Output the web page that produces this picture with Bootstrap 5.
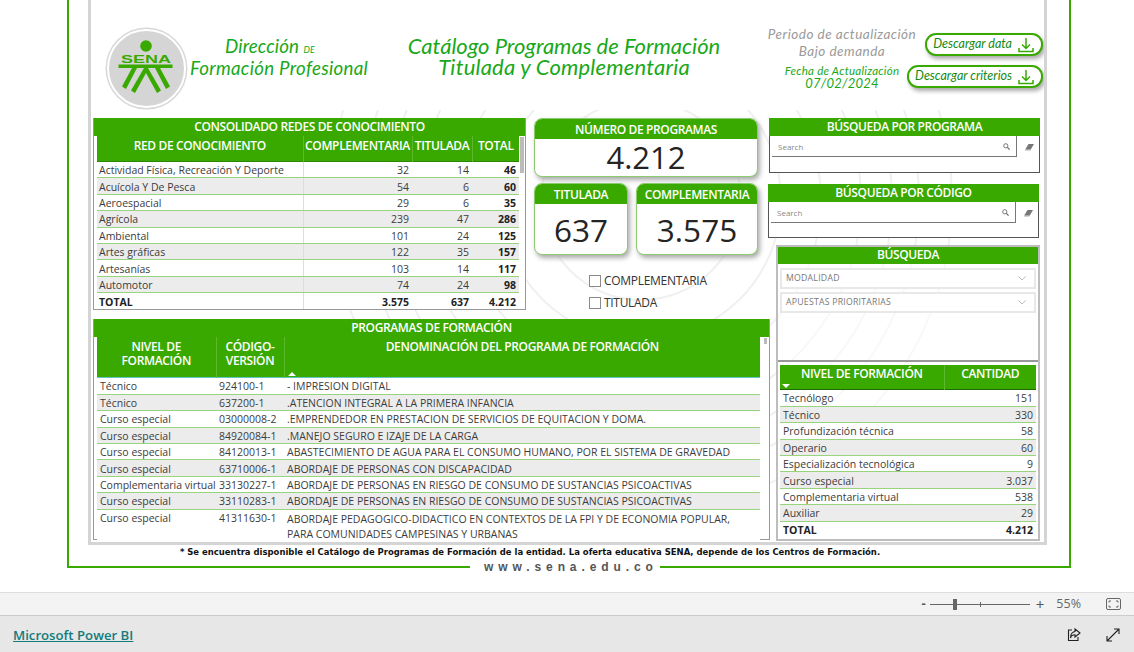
<!DOCTYPE html>
<html lang="es"><head><meta charset="utf-8"><title>Catálogo</title>
<link href="https://cdn.jsdelivr.net/npm/bootstrap@5.3.0/dist/css/bootstrap.min.css" rel="stylesheet">
<style>
html,body{height:652px;overflow:hidden;background:#fff}
body{font-family:"Open Sans","Noto Sans",sans-serif;color:#333;font-size:11px}
.view{height:592px}
.frame{margin-left:67px;width:1004px;height:568px;border:solid #39a900;border-width:0 2px 2px;padding-left:19px;position:relative}
.sheet{width:959px;height:545px;border:solid #d4d4d4;border-width:0 3px 3px;padding:0 0 0 2px;position:relative;overflow:hidden}
.wm{position:absolute;left:0;top:110px;width:953px;height:432px}
.sheet>.head,.sheet>.body-wrap{position:relative}
.head{height:118px}
.hand{font-family:"Lato",sans-serif;font-style:italic;color:#18a818;line-height:1}
.logo{width:83px;height:83px;margin:27px 0 0 12px;flex:none}
.dept{width:180px;margin:35px 0 0 1px;text-align:center;font-size:18.7px;padding-top:2px}
.dept div{height:22px;letter-spacing:.3px;white-space:nowrap}
.dept div.d1{padding-right:18px;letter-spacing:.1px}
.dept small{font-size:9px}
.maintitle{width:316px;margin:35px 0 0 37px;font-size:22px;text-align:center}
.maintitle.hand{line-height:21px}
.maintitle div{height:21px;white-space:nowrap}
.maintitle div.t2{letter-spacing:.2px}
.meta{width:156px;margin:0 0 0 42px;text-align:center;flex:none}
.peri{font-size:13.5px;margin-top:26px;line-height:17px;letter-spacing:.5px;white-space:nowrap}
.peri.hand{color:#9a9a9a;line-height:17px}
.upd{font-size:11.5px;line-height:12px;margin-top:5px;letter-spacing:.25px}
.upd.hand{line-height:12px}
.upd b{font-weight:400;font-size:13px}
.dlcol{flex:none;width:137px;margin:33px 0 0 -14px;align-items:flex-end}
.dl{height:23px;border:2px solid #39a900;border-radius:11px;background:#fff;box-shadow:2px 3px 4px #aaa;font-size:12.5px;padding:0 7px 0 6px;color:#148a14;gap:6px;white-space:nowrap}
.dl+.dl{margin-top:9px}
.colleft{width:677px;margin-left:0}
.toprow{height:201px}
.panela{width:433px;height:192px;border:1px solid #999;border-top:0;background:#fff;position:relative}
.panela .tb td:first-child{padding-left:2px}
.panela .tb th{height:25.5px}
.ttl{background:#39a900;color:#fff;font-weight:600;text-align:center;font-size:12px;letter-spacing:-.38px;line-height:18px;height:18px;white-space:nowrap}
.tb{table-layout:fixed;border-collapse:collapse;margin:0 0 0 3px;font-size:10.5px;color:#3c3c3c}
.tb th{background:#39a900;color:#fff;font-weight:600;font-size:12px;letter-spacing:-.36px;line-height:14px;text-align:center;vertical-align:top;padding:3px 1px 0;border-right:1px solid #5cb92f;border-bottom:0;box-shadow:inset 0 -1px 0 #2b8600}
.tb th:last-child{border-right:0}
.tb td{padding:2px 3px 0;white-space:nowrap;height:16.4px;line-height:13px;border-bottom:1px solid #97d47c}
.tb td.br{border-right:1px solid #ddd}
.tb tr:nth-child(even) td{background:#ececec}
.tb tfoot td,.tb td b{font-weight:700;color:#222}
.tb tfoot td{border-bottom:0;border-top:1px solid #97d47c;background:#fff}
.num{text-align:right}
.thumb{position:absolute;background:#bbb}
.midcol{width:224px;margin-left:8px}
.kpi{border:1px solid #8ccb6e;border-radius:8px;background:#fff;box-shadow:2px 3px 5px #aaa;overflow:hidden}
.kpi .ttl{height:20px;line-height:22px;font-size:12px}
.big{color:#252423;text-align:center;font-size:31px;line-height:37px;font-weight:500}
.kpi1{height:59px}
.kpi2{height:72px}
.kpi2 .big{line-height:52px;font-size:31.500px}
.kpis{margin-top:6px;gap:8px}
.chk{font-size:12px;letter-spacing:-.3px;color:#333;line-height:15px;gap:3px;margin-left:55px}
.box{width:12px;height:12px;border:1px solid #8a8a8a;background:#fff;display:block}
.chks{margin-top:18px;gap:7px}
.panelb{width:677px;height:221px;border:1px solid #999;border-top:0;background:#fff;position:relative;margin-top:0}
.panelb .tb td{white-space:nowrap}
.panelb .tb td.wrap{white-space:normal;line-height:15px}
.panelb .tb th{box-shadow:inset 0 -1px 0 #63c4c4}
.arrow{display:block;width:0;height:0;border:4px solid transparent;border-top:0;border-bottom:4px solid #fff}
.arrowd{display:block;width:0;height:0;border:4px solid transparent;border-bottom:0;border-top:4px solid #fff}
.colright{width:271px;margin-left:-1px}
.srch{width:271px;border:1px solid #555;border-top:0;background:#fff}
.srch .ttl{margin:0 -1px}
.sinput{height:21px;width:245px;margin-left:2px;border:solid #777;border-width:0 1px 1px 0;font-size:8px;color:#888;padding:1px 6px 0;background:#fff}
.s1{height:55px}
.s2{height:54px;margin:11px 0 0 -1px}
.filt{width:264px;height:296px;margin:7px 0 0 7px;border:2px solid #bdbdbd;background:rgba(255,255,255,.5);position:relative}
.filt .ttl{height:17px;line-height:16px}
.drop{height:21px;margin:4px 2px 0;border:2px solid #e8e8e8;font-size:8.7px;color:#777;padding:0 8px 0 4px;letter-spacing:.25px;background:#fff}
.drop+.drop{margin-top:3px}
.nivel{position:absolute;left:0;right:0;bottom:0;height:179px;border-top:2px solid #999;padding:3px 2px 0 2px}
.nivel .tb{margin:0}
.nivel .tb th{height:25px;padding-top:2px;box-shadow:inset 0 -1px 0 #1d6b00}
.foot{text-align:center;font-family:"DejaVu Sans",sans-serif;font-weight:700;font-size:8.48px;color:#111;line-height:14px;width:884px}
.site{position:absolute;left:401px;bottom:-8px;width:190px;height:14px;background:#fff;color:#555;padding-left:14px;font-family:"Liberation Sans",sans-serif;font-weight:700;font-size:12px;letter-spacing:4.9px;line-height:14px;white-space:nowrap}
.zoombar{height:22px;background:#f3f3f3;border-top:1px solid #ddd;border-bottom:1px solid #ccc;box-sizing:content-box;color:#555;font-size:12px}
.slider{width:100px;height:1px;background:#666;position:relative;margin:0 6px 0 4px}
.knob{position:absolute;left:23px;top:-5px;width:4px;height:11px;background:#666}
.tick{position:absolute;left:50px;top:-2px;width:1px;height:5px;background:#666}
.minus{font-weight:700;font-size:13px}
.plus{font-size:15px;line-height:1}
.pct{font-size:12.500px;color:#666;margin-left:12px}
.fit{margin:0 13px 0 25px}
.pbar{height:36px;background:#e7e7e7;padding:4px 13px 0}
.pbi{color:#117c7c;font-size:13.2px;font-weight:600;text-decoration:underline;font-family:"Open Sans",sans-serif}
.pbicons{gap:25px;margin-right:1px;margin-top:-2px}
</style></head>
<body>
<div class="view">
 <div class="frame">
  <div class="sheet">
   <svg class="wm" viewBox="0 110 953 432" fill="none" stroke="#f0f0f0" stroke-width="2">
    <circle cx="550" cy="200" r="100"/><circle cx="550" cy="200" r="140"/><circle cx="550" cy="200" r="180"/><circle cx="550" cy="200" r="220"/><circle cx="550" cy="200" r="251"/><circle cx="550" cy="200" r="278"/><circle cx="550" cy="200" r="311"/>
   </svg>
   <div class="head d-flex">
    <svg class="logo" viewBox="0 0 83 83">
     <circle cx="41.500" cy="41.500" r="41" fill="#d7d7d7"/><circle cx="41.500" cy="41.500" r="38.500" fill="#d5d5d5" stroke="#fff" stroke-width="2"/>
     <circle cx="41" cy="19" r="5.800" fill="#39a900"/>
     <text x="41" y="36" text-anchor="middle" font-family="Liberation Sans" font-weight="700" font-size="10.500" fill="#39a900" textLength="50" lengthAdjust="spacingAndGlyphs">SENA</text>
     <rect x="13.500" y="37.500" width="54" height="3.500" fill="#39a900"/>
     <path d="M27 41h5l-11 21-4-2.500zM55 41h-5l11 21 4-2.500z" fill="#39a900"/>
     <path d="M39 41h4l13 22.500-4 2.500-11-20-11 20-4-2.500z" fill="#39a900"/>
    </svg>
    <div class="dept hand"><div class="d1">Dirección <small>DE</small></div><div>Formación Profesional</div></div>
    <div class="maintitle hand"><div>Catálogo Programas de Formación</div><div class="t2">Titulada y Complementaria</div></div>
    <div class="meta">
     <div class="peri hand">Periodo de actualización<br>Bajo demanda</div>
     <div class="upd hand">Fecha de Actualización<br><b>07/02/2024</b></div>
    </div>
    <div class="d-flex flex-column dlcol">
     <div class="dl d-inline-flex align-items-center hand">Descargar data<svg width="16" height="16" viewBox="0 0 16 16" fill="none" stroke="#39a900" stroke-width="1.500"><path d="M8 1v10M4 7.500l4 4 4-4M1 11v3.500h14V11"/></svg></div>
     <div class="dl d-inline-flex align-items-center hand">Descargar criterios<svg width="16" height="16" viewBox="0 0 16 16" fill="none" stroke="#39a900" stroke-width="1.500"><path d="M8 1v10M4 7.500l4 4 4-4M1 11v3.500h14V11"/></svg></div>
    </div>
   </div>
   <div class="body-wrap d-flex">
    <div class="colleft">
     <div class="toprow d-flex">
      <div class="panela">
       <div class="ttl">CONSOLIDADO REDES DE CONOCIMIENTO</div>
       <table class="tb" style="width:422px">
        <colgroup><col style="width:206px"><col style="width:109px"><col style="width:60px"><col style="width:47px"></colgroup>
        <thead><tr><th>RED DE CONOCIMIENTO</th><th>COMPLEMENTARIA</th><th>TITULADA</th><th>TOTAL</th></tr></thead>
        <tbody>
         <tr><td class="br">Actividad Física, Recreación Y Deporte</td><td class="num">32</td><td class="num">14</td><td class="num"><b>46</b></td></tr>
         <tr><td class="br">Acuícola Y De Pesca</td><td class="num">54</td><td class="num">6</td><td class="num"><b>60</b></td></tr>
         <tr><td class="br">Aeroespacial</td><td class="num">29</td><td class="num">6</td><td class="num"><b>35</b></td></tr>
         <tr><td class="br">Agrícola</td><td class="num">239</td><td class="num">47</td><td class="num"><b>286</b></td></tr>
         <tr><td class="br">Ambiental</td><td class="num">101</td><td class="num">24</td><td class="num"><b>125</b></td></tr>
         <tr><td class="br">Artes gráficas</td><td class="num">122</td><td class="num">35</td><td class="num"><b>157</b></td></tr>
         <tr><td class="br">Artesanías</td><td class="num">103</td><td class="num">14</td><td class="num"><b>117</b></td></tr>
         <tr><td class="br">Automotor</td><td class="num">74</td><td class="num">24</td><td class="num"><b>98</b></td></tr>
        </tbody>
        <tfoot><tr><td class="br">TOTAL</td><td class="num">3.575</td><td class="num">637</td><td class="num">4.212</td></tr></tfoot>
       </table>
       <div class="thumb" style="left:426px;top:19px;width:4px;height:36px"></div>
      </div>
      <div class="midcol">
       <div class="kpi kpi1"><div class="ttl">NÚMERO DE PROGRAMAS</div><div class="big">4.212</div></div>
       <div class="d-flex kpis">
        <div class="kpi kpi2" style="width:94px"><div class="ttl">TITULADA</div><div class="big">637</div></div>
        <div class="kpi kpi2" style="width:122px"><div class="ttl">COMPLEMENTARIA</div><div class="big">3.575</div></div>
       </div>
       <div class="d-flex flex-column chks">
        <div class="d-flex align-items-center chk"><span class="box"></span>COMPLEMENTARIA</div>
        <div class="d-flex align-items-center chk"><span class="box"></span>TITULADA</div>
       </div>
      </div>
     </div>
     <div class="panelb">
      <div class="ttl">PROGRAMAS DE FORMACIÓN</div>
      <table class="tb" style="width:663px">
       <colgroup><col style="width:119px"><col style="width:68px"><col style="width:476px"></colgroup>
       <thead><tr style="height:41px"><th>NIVEL DE<br>FORMACIÓN</th><th>CÓDIGO-<br>VERSIÓN</th><th class="position-relative">DENOMINACIÓN DEL PROGRAMA DE FORMACIÓN<span class="arrow position-absolute" style="left:3px;bottom:2px"></span></th></tr></thead>
       <tbody>
        <tr><td>Técnico</td><td>924100-1</td><td>- IMPRESION DIGITAL</td></tr>
        <tr><td>Técnico</td><td>637200-1</td><td>.ATENCION INTEGRAL A LA PRIMERA INFANCIA</td></tr>
        <tr><td>Curso especial</td><td>03000008-2</td><td>.EMPRENDEDOR EN PRESTACION DE SERVICIOS DE EQUITACION Y DOMA.</td></tr>
        <tr><td>Curso especial</td><td>84920084-1</td><td>.MANEJO SEGURO E IZAJE DE LA CARGA</td></tr>
        <tr><td>Curso especial</td><td>84120013-1</td><td>ABASTECIMIENTO DE AGUA PARA EL CONSUMO HUMANO, POR EL SISTEMA DE GRAVEDAD</td></tr>
        <tr><td>Curso especial</td><td>63710006-1</td><td>ABORDAJE DE PERSONAS CON DISCAPACIDAD</td></tr>
        <tr><td>Complementaria virtual</td><td>33130227-1</td><td>ABORDAJE DE PERSONAS EN RIESGO DE CONSUMO DE SUSTANCIAS PSICOACTIVAS</td></tr>
        <tr><td>Curso especial</td><td>33110283-1</td><td>ABORDAJE DE PERSONAS EN RIESGO DE CONSUMO DE SUSTANCIAS PSICOACTIVAS</td></tr>
        <tr><td class="align-top border-0 bg-white">Curso especial</td><td class="align-top border-0 bg-white">41311630-1</td><td class="wrap border-0 bg-white">ABORDAJE PEDAGOGICO-DIDACTICO EN CONTEXTOS DE LA FPI Y DE ECONOMIA POPULAR,<br>PARA COMUNIDADES CAMPESINAS Y URBANAS</td></tr>
       </tbody>
      </table>
      <div class="thumb" style="left:670px;top:19px;width:3px;height:6px"></div>
     </div>
    </div>
    <div class="colright">
     <div class="srch s1"><div class="ttl">BÚSQUEDA POR PROGRAMA</div>
      <div class="d-flex align-items-start"><div class="sinput d-flex align-items-center justify-content-between">Search
        <svg width="7" height="7" viewBox="0 0 8 8" fill="none" stroke="#666"><circle cx="3.200" cy="3.200" r="2.400"/><path d="M5 5l2.500 2.500" stroke-width="1.400"/></svg></div>
       <svg class="ms-2 mt-2" width="9" height="7" viewBox="0 0 9 7"><path d="M3.500 0H9L6 5H.5z" fill="#777"/><path d="M.5 5H6L5.500 6.500H0z" fill="#aaa"/></svg></div></div>
     <div class="srch s2"><div class="ttl">BÚSQUEDA POR CÓDIGO</div>
      <div class="d-flex align-items-start"><div class="sinput d-flex align-items-center justify-content-between">Search
        <svg width="7" height="7" viewBox="0 0 8 8" fill="none" stroke="#666"><circle cx="3.200" cy="3.200" r="2.400"/><path d="M5 5l2.500 2.500" stroke-width="1.400"/></svg></div>
       <svg class="ms-2 mt-2" width="9" height="7" viewBox="0 0 9 7"><path d="M3.500 0H9L6 5H.5z" fill="#777"/><path d="M.5 5H6L5.500 6.500H0z" fill="#aaa"/></svg></div></div>
     <div class="filt">
      <div class="ttl">BÚSQUEDA</div>
      <div class="drop d-flex align-items-center justify-content-between">MODALIDAD<svg width="8" height="5" viewBox="0 0 8 5" fill="none" stroke="#bbb"><path d="M.5.500l3.500 3.500 3.500-3.500"/></svg></div>
      <div class="drop d-flex align-items-center justify-content-between">APUESTAS PRIORITARIAS<svg width="8" height="5" viewBox="0 0 8 5" fill="none" stroke="#bbb"><path d="M.5.500l3.500 3.500 3.500-3.500"/></svg></div>
      <div class="nivel">
       <table class="tb" style="width:256px">
        <colgroup><col style="width:164px"><col style="width:92px"></colgroup>
        <thead><tr><th class="position-relative">NIVEL DE FORMACIÓN<span class="arrowd position-absolute" style="left:2px;bottom:2px"></span></th><th>CANTIDAD</th></tr></thead>
        <tbody>
         <tr><td>Tecnólogo</td><td class="num">151</td></tr>
         <tr><td>Técnico</td><td class="num">330</td></tr>
         <tr><td>Profundización técnica</td><td class="num">58</td></tr>
         <tr><td>Operario</td><td class="num">60</td></tr>
         <tr><td>Especialización tecnológica</td><td class="num">9</td></tr>
         <tr><td>Curso especial</td><td class="num">3.037</td></tr>
         <tr><td>Complementaria virtual</td><td class="num">538</td></tr>
         <tr><td>Auxiliar</td><td class="num">29</td></tr>
        </tbody>
        <tfoot><tr><td>TOTAL</td><td class="num">4.212</td></tr></tfoot>
       </table>
      </div>
     </div>
    </div>
   </div>
  </div>
  <div class="foot">* Se encuentra disponible el Catálogo de Programas de Formación de la entidad. La oferta educativa SENA, depende de los Centros de Formación.</div>
  <div class="site">www.sena.edu.co</div>
 </div>
</div>
<div class="zoombar d-flex align-items-center">
 <div class="d-flex align-items-center ms-auto">
  <span class="minus">-</span>
  <div class="slider"><span class="knob"></span><span class="tick"></span></div>
  <span class="plus">+</span>
  <span class="pct">55%</span>
  <svg class="fit" width="15" height="12" viewBox="0 0 15 12" fill="none" stroke="#666"><rect x=".5" y=".5" width="14" height="11" rx="1.500"/><path d="M3 4.500V3h2M10 3h2v1.500M12 7.500V9h-2M5 9H3V7.500"/></svg>
 </div>
</div>
<div class="pbar d-flex align-items-center justify-content-between">
 <a class="pbi" href="#">Microsoft Power BI</a>
 <div class="d-flex align-items-center pbicons">
  <svg width="14" height="14" viewBox="0 0 14 14" fill="none" stroke="#222" stroke-width="1.100"><path d="M5 2H1.500v10.500H11V9"/><path d="M8 1l5 4-5 4V6.800C5.500 6.800 4 8 3.500 10c0-3.500 1.500-6 4.500-6.500z"/></svg>
  <svg width="14" height="14" viewBox="0 0 14 14" fill="none" stroke="#222" stroke-width="1.100"><path d="M1 13L13 1M8 1h5v5M1 8v5h5"/></svg>
 </div>
</div>
</body></html>
